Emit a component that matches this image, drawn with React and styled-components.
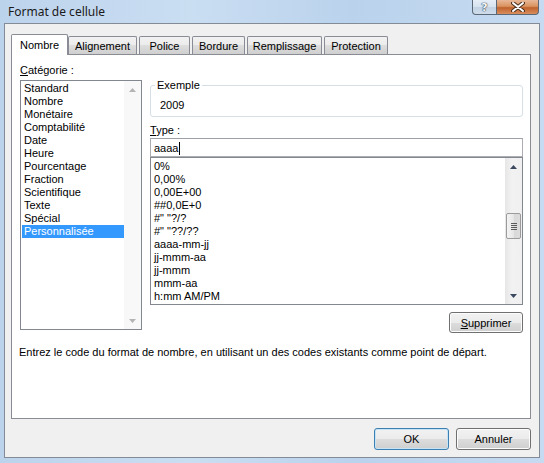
import React from 'react';
import styled, { createGlobalStyle } from 'styled-components';

const GlobalStyle = createGlobalStyle`
  html, body {
    margin: 0;
    padding: 0;
  }
  body {
    font-family: "Liberation Sans", Arial, sans-serif;
    font-size: 11px;
    color: #000;
  }
`;

const Window = styled.div`
  width: 544px;
  height: 463px;
  box-sizing: border-box;
  padding: 0 4px 5px 4px;
  display: flex;
  flex-direction: column;
  background: linear-gradient(to right, #bcd3ec 0%, #cadef2 35%, #bad2ec 65%, #c6dbf1 100%);
`;

const TitleBar = styled.div`
  height: 23px;
  flex-shrink: 0;
  display: flex;
  justify-content: space-between;
  align-items: flex-start;
`;

const Title = styled.div`
  padding-left: 4px;
  line-height: 23px;
  font-size: 12px;
  font-family: "Noto Sans", "Liberation Sans", sans-serif;
  color: #1a1a1a;
`;

const Controls = styled.div`
  display: flex;
  margin-right: 1px;
`;

const CaptionButton = styled.div`
  height: 15px;
  box-sizing: border-box;
  width: ${p => p.$w}px;
  border: 1px solid #5a6878;
  border-top: none;
  display: flex;
  align-items: center;
  justify-content: center;
  ${p => p.$close ? `
    border-radius: 0 0 4px 0;
    border-left: none;
    background: linear-gradient(#e8b898 0%, #d9935f 45%, #c0622c 55%, #d98e5e 100%);
  ` : `
    border-radius: 0 0 0 4px;
    background: linear-gradient(#e6eef7 0%, #d6e2ee 50%, #c3d3e3 52%, #cfdcea 100%);
  `}
`;

const HelpGlyph = styled.span`
  font: bold 11px "DejaVu Sans", sans-serif;
  color: #f4f7fa;
  text-shadow: 0 0 1px #3a4656, 0 0 1px #3a4656, 0 0 1px #3a4656;
  line-height: 13px;
`;

const Client = styled.div`
  flex: 1;
  display: flex;
  flex-direction: column;
  border: 1px solid #838b96;
  background: #f0f0f0;
  padding: 10px 8px 7px 6px;
`;

const TabStrip = styled.div`
  display: flex;
  align-items: flex-end;
  height: 20px;
  position: relative;
  z-index: 1;
`;

const Tab = styled.div`
  box-sizing: border-box;
  width: ${p => p.$w}px;
  margin-left: ${p => p.$gap}px;
  border: 1px solid #898c95;
  border-bottom: none;
  border-radius: 2px 2px 0 0;
  text-align: center;
  ${p => p.$active ? `
    height: 21px;
    margin-bottom: -1px;
    line-height: 21px;
    background: #fff;
  ` : `
    height: 18px;
    line-height: 18px;
    background: linear-gradient(#f2f2f2 0%, #ebebeb 50%, #dddddd 50%, #cfcfcf 100%);
  `}
`;

const Panel = styled.div`
  box-sizing: border-box;
  height: 365px;
  border: 1px solid #898c95;
  background: #fff;
  padding: 9px 7px 0 8px;
`;

const Columns = styled.div`
  display: grid;
  grid-template-columns: 122px 373px;
  column-gap: 8px;
  align-items: start;
`;

const Column = styled.div`
  display: flex;
  flex-direction: column;
  padding-top: ${p => p.$top || 0}px;
`;

const Label = styled.div`
  line-height: 13px;
  margin-top: ${p => p.$mt || 0}px;
  margin-bottom: ${p => p.$mb || 0}px;
  u { text-decoration: underline; }
`;

const ListBox = styled.div`
  box-sizing: border-box;
  height: ${p => p.$h}px;
  border: 1px solid #828790;
  background: #fff;
  display: flex;
`;

const Items = styled.div`
  flex: 1;
  padding: ${p => p.$pad};
`;

const Item = styled.div`
  line-height: 13px;
  height: 13px;
  padding-left: ${p => p.$indent}px;
  white-space: nowrap;
  ${p => p.$selected && `
    background: #3399ff;
    color: #fff;
  `}
`;

const ScrollBar = styled.div`
  width: 17px;
  display: flex;
  flex-direction: column;
  background: ${p => p.$disabled ? '#f8f8f8' : 'linear-gradient(to right, #e6e6e6, #f2f2f2 40%, #f0f0f0)'};
`;

const ArrowBox = styled.div`
  height: 17px;
  display: flex;
  align-items: center;
  justify-content: center;
`;

const Track = styled.div`
  flex: 1;
  padding: 0 1px;
`;

const Thumb = styled.div`
  box-sizing: border-box;
  height: 26px;
  border: 1px solid #9b9b9b;
  border-radius: 2px;
  background: linear-gradient(to right, #f4f4f4, #e6e6e6 50%, #d8d8d8 51%, #dcdcdc);
  display: flex;
  flex-direction: column;
  align-items: center;
  justify-content: center;
  gap: 1px;
`;

const Grip = styled.div`
  width: 6px;
  height: 1px;
  background: #5a5a5a;
`;

const GroupBox = styled.div`
  position: relative;
  box-sizing: border-box;
  height: 32px;
  border: 1px solid #d5dfe5;
  border-radius: 3px;
  padding: 13px 9px 0;
  line-height: 13px;
`;

const Legend = styled.span`
  position: absolute;
  top: -7px;
  left: 4px;
  padding: 0 2px;
  background: #fff;
  line-height: 13px;
`;

const TextInput = styled.div`
  box-sizing: border-box;
  height: 19px;
  border: 1px solid #abadb3;
  border-top-color: #9da0a8;
  padding: 2px 3px 0;
  line-height: 13px;
  display: flex;
  align-items: center;
`;

const Caret = styled.span`
  display: inline-block;
  width: 1px;
  height: 13px;
  background: #000;
  margin-left: 1px;
`;

const Button = styled.div`
  box-sizing: border-box;
  width: ${p => p.$w}px;
  height: ${p => p.$h || 22}px;
  border: 1px solid ${p => p.$default ? '#3c7fb1' : '#707070'};
  border-radius: 3px;
  background: linear-gradient(#f2f2f2 0%, #ebebeb 50%, #dddddd 50%, #cfcfcf 100%);
  box-shadow: inset 0 0 0 1px ${p => p.$default ? '#c6e4f6' : '#fcfcfc'};
  display: flex;
  align-items: center;
  justify-content: center;
  align-self: ${p => p.$end ? 'flex-end' : 'auto'};
  margin-top: ${p => p.$mt || 0}px;
  u { text-decoration: underline; }
`;

const Description = styled.div`
  margin: 13px 0 0 -1px;
  line-height: 13px;
`;

const Footer = styled.div`
  display: flex;
  justify-content: flex-end;
  gap: 7px;
  margin-top: 9px;
`;

const Arrow = ({ up, color }) => (
  <svg width="7" height="4" viewBox="0 0 7 4">
    {up
      ? <polygon points="0,4 3.5,0 7,4" fill={color} />
      : <polygon points="0,0 7,0 3.5,4" fill={color} />}
  </svg>
);

const categories = [
  'Standard', 'Nombre', 'Monétaire', 'Comptabilité', 'Date', 'Heure',
  'Pourcentage', 'Fraction', 'Scientifique', 'Texte', 'Spécial', 'Personnalisée'
];

const formats = [
  '0%', '0,00%', '0,00E+00', '##0,0E+0', '#" "?/?', '#" "??/??',
  'aaaa-mm-jj', 'jj-mmm-aa', 'jj-mmm', 'mmm-aa', 'h:mm AM/PM'
];

const tabs = [
  { name: 'Nombre', w: 57, gap: 0, active: true },
  { name: 'Alignement', w: 69, gap: 0 },
  { name: 'Police', w: 51, gap: 2 },
  { name: 'Bordure', w: 53, gap: 2 },
  { name: 'Remplissage', w: 75, gap: 2 },
  { name: 'Protection', w: 64, gap: 2 }
];

export default function App() {
  return (
    <>
      <GlobalStyle />
      <Window>
        <TitleBar>
          <Title>Format de cellule</Title>
          <Controls>
            <CaptionButton $w={25}><HelpGlyph>?</HelpGlyph></CaptionButton>
            <CaptionButton $w={42} $close>
              <svg width="14" height="10" viewBox="0 0 14 10">
                <path d="M2 1 L12 9 M12 1 L2 9" stroke="#4a3020" strokeWidth="4" strokeLinecap="round" />
                <path d="M2 1 L12 9 M12 1 L2 9" stroke="#fff" strokeWidth="2" strokeLinecap="round" />
              </svg>
            </CaptionButton>
          </Controls>
        </TitleBar>
        <Client>
          <TabStrip>
            {tabs.map(t => (
              <Tab key={t.name} $w={t.w} $gap={t.gap} $active={t.active}>{t.name}</Tab>
            ))}
          </TabStrip>
          <Panel>
            <Columns>
              <Column>
                <Label $mb={3}><u>C</u>atégorie :</Label>
                <ListBox $h={250}>
                  <Items $pad="1px 0 0 1px">
                    {categories.map(c => (
                      <Item key={c} $indent={2} $selected={c === 'Personnalisée'}>{c}</Item>
                    ))}
                  </Items>
                  <ScrollBar $disabled>
                    <ArrowBox><Arrow up color="#b4b4b4" /></ArrowBox>
                    <Track />
                    <ArrowBox><Arrow color="#b4b4b4" /></ArrowBox>
                  </ScrollBar>
                </ListBox>
              </Column>
              <Column $top={21}>
                <GroupBox>
                  <Legend>Exemple</Legend>
                  2009
                </GroupBox>
                <Label $mt={7} $mb={1}><u>T</u>ype :</Label>
                <TextInput>aaaa<Caret /></TextInput>
                <ListBox $h={148}>
                  <Items $pad="2px 0 0 3px">
                    {formats.map(f => (
                      <Item key={f} $indent={0}>{f}</Item>
                    ))}
                  </Items>
                  <ScrollBar>
                    <ArrowBox><Arrow up color="#3b4a5e" /></ArrowBox>
                    <Track>
                      <Thumb style={{ marginTop: 38 }}>
                        <Grip /><Grip /><Grip /><Grip />
                      </Thumb>
                    </Track>
                    <ArrowBox><Arrow color="#3b4a5e" /></ArrowBox>
                  </ScrollBar>
                </ListBox>
                <Button $w={74} $h={21} $end $mt={7}><span><u>S</u>upprimer</span></Button>
              </Column>
            </Columns>
            <Description>
              Entrez le code du format de nombre, en utilisant un des codes existants comme point de départ.
            </Description>
          </Panel>
          <Footer>
            <Button $w={75} $default>OK</Button>
            <Button $w={75}>Annuler</Button>
          </Footer>
        </Client>
      </Window>
    </>
  );
}
